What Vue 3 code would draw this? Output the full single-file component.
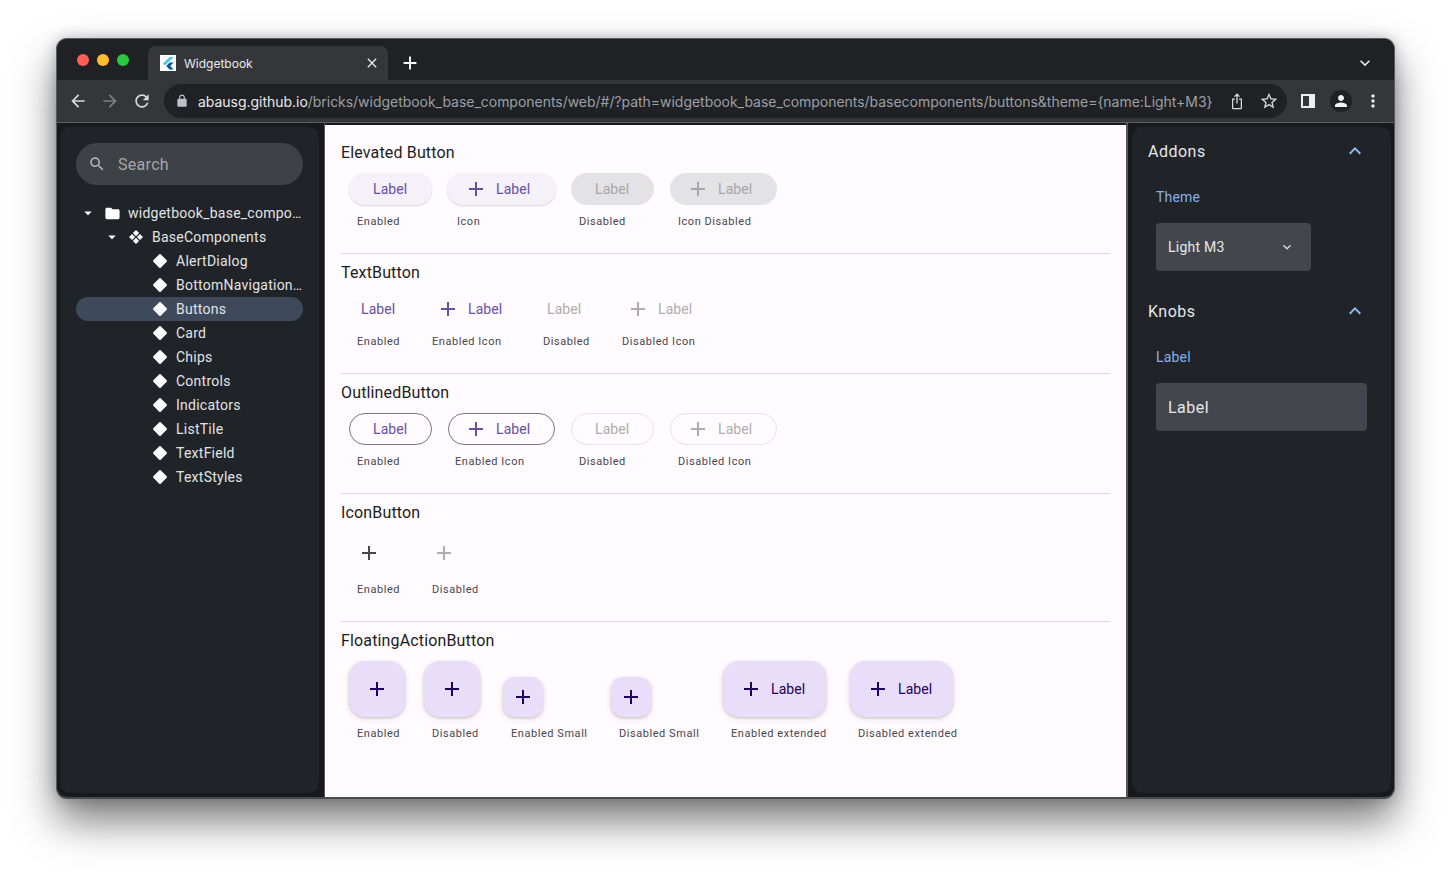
<script setup>
const icons = {
  search: 'M15.5 14h-.79l-.28-.27C15.41 12.59 16 11.11 16 9.5 16 5.91 13.09 3 9.5 3S3 5.91 3 9.5 5.91 16 9.5 16c1.61 0 3.09-.59 4.23-1.57l.27.28v.79l5 4.99L20.49 19l-4.99-5zm-6 0C7.01 14 5 11.99 5 9.5S7.01 5 9.5 5 14 7.01 14 9.5 11.99 14 9.5 14z',
  add: 'M19 13h-6v6h-2v-6H5v-2h6V5h2v6h6v2z',
  folder: 'M10 4H4c-1.1 0-1.99.9-1.99 2L2 18c0 1.1.9 2 2 2h16c1.1 0 2-.9 2-2V8c0-1.1-.9-2-2-2h-8l-2-2z',
  drop: 'M7 10l5 5 5-5z',
  less: 'M12 8l-6 6 1.41 1.41L12 10.83l4.59 4.58L18 14z',
  more: 'M16.59 8.59L12 13.17 7.41 8.59 6 10l6 6 6-6z',
  back: 'M20 11H7.83l5.59-5.59L12 4l-8 8 8 8 1.41-1.41L7.83 13H20v-2z',
  forward: 'M12 4l-1.41 1.41L16.17 11H4v2h12.17l-5.58 5.59L12 20l8-8z',
  refresh: 'M17.65 6.35C16.2 4.9 14.21 4 12 4c-4.42 0-7.99 3.58-7.99 8s3.57 8 7.99 8c3.73 0 6.84-2.55 7.73-6h-2.08c-.82 2.33-3.04 4-5.65 4-3.31 0-6-2.69-6-6s2.69-6 6-6c1.66 0 3.14.69 4.22 1.78L13 11h7V4l-2.35 2.35z',
  lock: 'M18 8h-1V6c0-2.76-2.24-5-5-5S7 3.24 7 6v2H6c-1.1 0-2 .9-2 2v10c0 1.1.9 2 2 2h12c1.1 0 2-.9 2-2V10c0-1.1-.9-2-2-2zM9 6c0-1.66 1.34-3 3-3s3 1.34 3 3v2H9V6z',
  star: 'M22 9.24l-7.19-.62L12 2 9.19 8.63 2 9.24l5.46 4.73L5.82 21 12 17.27 18.18 21l-1.63-7.03L22 9.24zM12 15.4l-3.76 2.27 1-4.28-3.32-2.88 4.38-.38L12 6.1l1.71 4.04 4.38.38-3.32 2.88 1 4.28L12 15.4z',
  person: 'M12 12c2.21 0 4-1.79 4-4s-1.79-4-4-4-4 1.79-4 4 1.79 4 4 4zm0 2c-2.67 0-8 1.34-8 4v2h16v-2c0-2.66-5.33-4-8-4z',
  dots: 'M12 8c1.1 0 2-.9 2-2s-.9-2-2-2-2 .9-2 2 .9 2 2 2zm0 2c-1.1 0-2 .9-2 2s.9 2 2 2 2-.9 2-2-.9-2-2-2zm0 6c-1.1 0-2 .9-2 2s.9 2 2 2 2-.9 2-2-.9-2-2-2z',
  close: 'M19 6.41L17.59 5 12 10.59 6.41 5 5 6.41 10.59 12 5 17.59 6.41 19 12 13.41 17.59 19 19 17.59 13.41 12z',
  share: 'M12 2.6 8.4 6.2l1.1 1.1 1.7-1.7V15h1.6V5.6l1.7 1.7 1.1-1.1L12 2.6zM6 9v11.5c0 .8.7 1.5 1.5 1.5h9c.8 0 1.5-.7 1.5-1.5V9h-3.5v1.5h2v10h-9v-10h2V9H6z',
  diamond: 'M12 1.6c.4 0 .8.2 1.1.4l8.9 8.9c.6.6.6 1.6 0 2.2l-8.9 8.9c-.6.6-1.6.6-2.2 0L2 13.1c-.6-.6-.6-1.6 0-2.2L10.9 2c.3-.2.7-.4 1.1-.4z',
  comp: 'M12 1.5 16.6 6.1 12 10.7 7.4 6.1zM6.1 7.4 10.7 12 6.1 16.6 1.5 12zM17.9 7.4 22.5 12 17.9 16.6 13.3 12zM12 13.3 16.6 17.9 12 22.5 7.4 17.9z',
}

const leaves = ['AlertDialog', 'BottomNavigation…', 'Buttons', 'Card', 'Chips', 'Controls', 'Indicators', 'ListTile', 'TextField', 'TextStyles']

const sections = [
  {
    title: 'Elevated Button',
    items: [
      { cap: 'Enabled', w: 98, c: 8, type: 'elevated' },
      { cap: 'Icon', w: 124, c: 10, type: 'elevated lifted', icon: true },
      { cap: 'Disabled', w: 99, c: 8, type: 'elevated off' },
      { cap: 'Icon Disabled', w: 120, c: 8, type: 'elevated off', icon: true },
    ],
  },
  {
    title: 'TextButton',
    items: [
      { cap: 'Enabled', w: 79, c: 8, type: 'text' },
      { cap: 'Enabled Icon', w: 107, c: 4, type: 'text', icon: true },
      { cap: 'Disabled', w: 83, c: 8, type: 'text off' },
      { cap: 'Disabled Icon', w: 120, c: 4, type: 'text off', icon: true },
    ],
  },
  {
    title: 'OutlinedButton',
    items: [
      { cap: 'Enabled', w: 98, c: 8, type: 'outlined' },
      { cap: 'Enabled Icon', w: 124, c: 8, type: 'outlined nudged', icon: true },
      { cap: 'Disabled', w: 99, c: 8, type: 'outlined off' },
      { cap: 'Disabled Icon', w: 120, c: 8, type: 'outlined off', icon: true },
    ],
  },
]

const fabs = [
  { cap: 'Enabled', w: 75, type: 'fab' },
  { cap: 'Disabled', w: 79, type: 'fab' },
  { cap: 'Enabled Small', w: 108, type: 'fab small' },
  { cap: 'Disabled Small', w: 112, type: 'fab small' },
  { cap: 'Enabled extended', w: 127, type: 'fab wide', label: true },
  { cap: 'Disabled extended', w: 130, type: 'fab wide', label: true },
]
</script>

<template>
  <div class="page">
    <div class="window">
      <div class="tabstrip">
        <div class="lights">
          <span class="light red"></span>
          <span class="light amber"></span>
          <span class="light green"></span>
        </div>
        <div class="tab">
          <svg class="favicon" viewBox="0 0 16 16">
            <rect width="16" height="16" fill="#fff" />
            <path d="M9.6 2 3 8.6l2 2L13.6 2z" fill="#47c5fb" />
            <path d="M9.6 7.6 6.2 11l3.4 3.4h4L10.2 11l3.4-3.4z" fill="#00569e" />
          </svg>
          <span class="tab-title">Widgetbook</span>
          <svg class="tab-close" viewBox="0 0 24 24"><path :d="icons.close" /></svg>
        </div>
        <svg class="new-tab" viewBox="0 0 24 24"><path :d="icons.add" /></svg>
        <svg class="tab-menu" viewBox="0 0 24 24"><path :d="icons.more" /></svg>
      </div>

      <div class="toolbar">
        <svg class="tool" viewBox="0 0 24 24"><path :d="icons.back" /></svg>
        <svg class="tool dim" viewBox="0 0 24 24"><path :d="icons.forward" /></svg>
        <svg class="tool" viewBox="0 0 24 24"><path :d="icons.refresh" /></svg>
        <div class="omnibox">
          <svg class="lock" viewBox="0 0 24 24"><path :d="icons.lock" /></svg>
          <div class="url"><span class="host">abausg.github.io</span>/bricks/widgetbook_base_components/web/#/?path=widgetbook_base_components/basecomponents/buttons&amp;theme={name:Light+M3}</div>
          <svg class="tool" viewBox="0 0 24 24"><path :d="icons.share" /></svg>
          <svg class="tool" viewBox="0 0 24 24"><path :d="icons.star" /></svg>
        </div>
        <div class="side-toggle"><span></span></div>
        <div class="avatar">
          <svg viewBox="0 0 24 24"><path :d="icons.person" /></svg>
        </div>
        <svg class="tool kebab" viewBox="0 0 24 24"><path :d="icons.dots" /></svg>
      </div>

      <div class="body">
        <aside class="rail left">
          <div class="panel nav">
            <div class="search">
              <svg viewBox="0 0 24 24"><path :d="icons.search" /></svg>
              <span>Search</span>
            </div>
            <div class="tree">
              <div class="row lvl0">
                <svg class="caret" viewBox="0 0 24 24"><path :d="icons.drop" /></svg>
                <svg class="folder" viewBox="0 0 24 24"><path :d="icons.folder" /></svg>
                <span>widgetbook_base_compo…</span>
              </div>
              <div class="row lvl1">
                <svg class="caret" viewBox="0 0 24 24"><path :d="icons.drop" /></svg>
                <svg class="comp" viewBox="0 0 24 24"><path :d="icons.comp" /></svg>
                <span>BaseComponents</span>
              </div>
              <div v-for="leaf in leaves" :key="leaf" class="row lvl2" :class="{ selected: leaf === 'Buttons' }">
                <svg class="leaf" viewBox="0 0 24 24"><path :d="icons.diamond" /></svg>
                <span>{{ leaf }}</span>
              </div>
            </div>
          </div>
        </aside>

        <main class="content">
          <section v-for="s in sections" :key="s.title" class="section">
            <h2>{{ s.title }}</h2>
            <div class="cells">
              <div v-for="item in s.items" :key="item.cap" class="cell" :style="{ width: item.w + 'px' }">
                <div class="slot">
                  <div class="btn" :class="[item.type, { 'with-icon': item.icon }]">
                    <svg v-if="item.icon" viewBox="0 0 24 24"><path :d="icons.add" /></svg>
                    <span>Label</span>
                  </div>
                </div>
                <div class="cap" :style="{ paddingLeft: item.c + 'px' }">{{ item.cap }}</div>
              </div>
            </div>
          </section>

          <section class="section tall">
            <h2>IconButton</h2>
            <div class="cells spaced">
              <div class="cell icon-cell-a">
                <div class="icon-btn"><svg viewBox="0 0 24 24"><path :d="icons.add" /></svg></div>
                <div class="cap pad">Enabled</div>
              </div>
              <div class="cell icon-cell-b">
                <div class="icon-btn off"><svg viewBox="0 0 24 24"><path :d="icons.add" /></svg></div>
                <div class="cap pad">Disabled</div>
              </div>
            </div>
          </section>

          <section class="section last">
            <h2>FloatingActionButton</h2>
            <div class="cells spaced">
              <div v-for="f in fabs" :key="f.cap" class="cell fab-cell" :style="{ width: f.w + 'px' }">
                <div :class="f.type">
                  <svg viewBox="0 0 24 24"><path :d="icons.add" /></svg>
                  <span v-if="f.label">Label</span>
                </div>
                <div class="cap pad">{{ f.cap }}</div>
              </div>
            </div>
          </section>
        </main>

        <aside class="rail right">
          <div class="panel addons">
            <div class="head">
              <span>Addons</span>
              <svg viewBox="0 0 24 24"><path :d="icons.less" /></svg>
            </div>
            <div class="field-label">Theme</div>
            <div class="dropdown">
              <span>Light M3</span>
              <svg viewBox="0 0 24 24"><path :d="icons.more" /></svg>
            </div>
            <div class="head knobs">
              <span>Knobs</span>
              <svg viewBox="0 0 24 24"><path :d="icons.less" /></svg>
            </div>
            <div class="field-label">Label</div>
            <div class="input">Label</div>
          </div>
        </aside>
      </div>
    </div>
  </div>
</template>

<style>
html, body { margin: 0; background: #fff; overflow: hidden; }
</style>

<style scoped>
.page {
  box-sizing: border-box;
  width: 1451px;
  height: 873px;
  padding: 38px 56px 0;
  background: #fff;
  font-family: Roboto, "Liberation Sans", sans-serif;
}
.window {
  box-sizing: border-box;
  width: 1339px;
  height: 761px;
  border: 1px solid #5a5b5e;
  border-bottom: 2px solid #4a4a4c;
  border-radius: 11px;
  overflow: hidden;
  display: flex;
  flex-direction: column;
  background: #17191c;
}
.page .window { box-shadow: 0 22px 42px rgba(0, 0, 0, .52), 0 0 14px rgba(0, 0, 0, .22); }

.tabstrip {
  height: 41px;
  flex: none;
  display: flex;
  align-items: center;
  background: #202124;
}
.lights { display: flex; gap: 8px; padding-left: 20px; width: 71px; box-sizing: content-box; }
.light { width: 12px; height: 12px; border-radius: 50%; flex: none; }
.red { background: #ff5f57; }
.amber { background: #febc2e; }
.green { background: #28c840; }
.tab {
  box-sizing: border-box;
  width: 240px;
  height: 34px;
  align-self: flex-end;
  display: flex;
  align-items: center;
  padding: 0 8px 0 12px;
  background: #35363a;
  border-radius: 8px 8px 0 0;
}
.favicon { width: 16px; height: 16px; flex: none; }
.tab-title {
  margin-left: 8px;
  flex: 1;
  color: #e8eaed;
  font: 400 12px Inter, "Liberation Sans", sans-serif;
}
.tab-close { width: 16px; height: 16px; fill: #e8eaed; }
.new-tab { width: 22px; height: 22px; margin-left: 11px; margin-top: 6px; fill: #fff; }
.tab-menu { width: 20px; height: 20px; margin-left: auto; margin-right: 19px; margin-top: 6px; fill: #e8eaed; }

.toolbar {
  height: 42px;
  flex: none;
  display: flex;
  align-items: center;
  gap: 12px;
  padding-left: 11px;
  background: #35363a;
  border-bottom: 1px solid #5f6063;
  box-sizing: content-box;
}
.tool { width: 20px; height: 20px; flex: none; fill: #d7dadd; }
.tool.dim { fill: #7d7e81; }
.omnibox {
  box-sizing: border-box;
  width: 1123px;
  height: 34px;
  display: flex;
  align-items: center;
  gap: 12px;
  padding: 0 8px 0 11px;
  background: #202124;
  border-radius: 17px;
}
.lock { width: 14px; height: 14px; flex: none; fill: #bdc1c6; }
.url {
  flex: 1;
  min-width: 0;
  margin-left: -3px;
  white-space: nowrap;
  color: #9aa0a6;
  font: 400 14px Inter, "Liberation Sans", sans-serif;
  letter-spacing: -.03px;
}
.host { color: #e8eaed; }
.side-toggle {
  box-sizing: border-box;
  width: 14px;
  height: 14px;
  margin-left: 2px;
  margin-right: 3px;
  background: #eceef0;
  padding: 2px 6px 2px 2px;
}
.side-toggle span { display: block; width: 100%; height: 100%; background: #35363a; }
.avatar {
  width: 22px;
  height: 22px;
  border-radius: 50%;
  background: #202124;
  display: flex;
  align-items: center;
  justify-content: center;
}
.avatar svg { width: 18px; height: 18px; fill: #f1f3f4; }
.kebab { margin-left: -1px; fill: #e8eaed; }

.body { flex: 1; min-height: 0; display: flex; }
.rail { box-sizing: border-box; width: 268px; flex: none; display: flex; padding: 4px 3px; }
.rail.left { border-right: 1px solid #55575a; padding-right: 5px; }
.rail.right { border-left: 2px solid #55575a; padding-left: 4px; }
.panel { flex: 1; min-width: 0; background: #202327; border-radius: 10px; }
.nav { padding: 16px; }
.search {
  height: 42px;
  border-radius: 21px;
  background: #3e4146;
  display: flex;
  align-items: center;
  gap: 12px;
  padding-left: 12px;
  color: #a5a7aa;
  font-size: 16px;
  letter-spacing: .3px;
}
.search svg { width: 18px; height: 18px; fill: #b5b7ba; }
.tree { margin-top: 16px; }
.row {
  height: 24px;
  display: flex;
  align-items: center;
  border-radius: 12px;
  color: #e1e3e6;
  font-size: 14px;
  letter-spacing: .25px;
  white-space: nowrap;
}
.row.selected { background: #3e4a5c; }
.caret { width: 18px; height: 18px; fill: #fff; flex: none; margin-left: 3px; }
.folder { width: 17px; height: 17px; fill: #fff; flex: none; margin-left: 7px; margin-right: 7px; }
.lvl1 .caret { margin-left: 27px; }
.comp { width: 16px; height: 16px; fill: #fff; flex: none; margin-left: 7px; margin-right: 8px; }
.leaf { width: 16px; height: 16px; fill: #fff; flex: none; margin-left: 76px; margin-right: 8px; }

.content {
  flex: 1;
  min-width: 0;
  margin-top: 2px;
  padding: 9px 16px 0;
  background: #fffbfe;
  color: #1c1b1f;
}
.section { height: 120px; box-sizing: border-box; padding-top: 7px; border-bottom: 1px solid #dcdade; }
.section.tall { height: 128px; }
.section.last { border-bottom: 0; height: auto; }
h2 {
  margin: 0;
  height: 24px;
  font-size: 16px;
  font-weight: 400;
  line-height: 24px;
  letter-spacing: .15px;
}
.cells { display: flex; padding-left: 8px; margin-top: 4px; }
.cells.spaced { margin-top: 8px; }
.cell { flex: none; display: flex; flex-direction: column; }
.icon-cell-a { width: 75px; }
.icon-cell-b { width: 100px; }
.slot { height: 40px; display: flex; align-items: center; }
.cap {
  height: 24px;
  line-height: 26px;
  font-size: 11px;
  letter-spacing: .55px;
  color: #49454f;
  white-space: nowrap;
}
.pad { padding-left: 8px; margin-top: 4px; }

.btn {
  box-sizing: border-box;
  height: 32px;
  display: inline-flex;
  align-items: center;
  justify-content: center;
  gap: 8px;
  padding: 0 25px 0 24px;
  border-radius: 16px;
  color: #6750a4;
  fill: #6750a4;
  font-size: 14px;
  letter-spacing: .1px;
  white-space: nowrap;
}
.btn svg { width: 24px; height: 24px; flex: none; }
.btn.with-icon { padding-left: 16px; }
.btn.off { color: #aeacb0; fill: #aeacb0; }
.btn.elevated { background: #f5f1f9; box-shadow: 0 1px 2px rgba(0, 0, 0, .16); }
.btn.elevated.lifted { padding: 0 26px 0 17px; }
.btn.elevated.off { background: #e3e2e4; box-shadow: none; color: #a7a6a9; fill: #a7a6a9; }
.btn.text { padding: 0 12px; }
.btn.text.with-icon { padding: 0 12px 0 8px; }
.btn.outlined { border: 1px solid #79747e; padding: 0 24px 0 23px; }
.btn.outlined.with-icon { padding-left: 15px; }
.btn.outlined.nudged { margin-left: 1px; }
.btn.outlined.off { border-color: #e6e3e8; }

.icon-btn {
  width: 40px;
  height: 40px;
  display: flex;
  align-items: center;
  justify-content: center;
  fill: #49454f;
}
.icon-btn svg { width: 24px; height: 24px; }
.icon-btn.off { fill: #aeacb0; }

.fab-cell { justify-content: flex-end; height: 84px; }
.fab {
  box-sizing: border-box;
  width: 56px;
  height: 56px;
  display: flex;
  align-items: center;
  justify-content: center;
  gap: 8px;
  border-radius: 16px;
  background: #e8defa;
  box-shadow: 0 1px 3px rgba(0, 0, 0, .16), 0 2px 7px rgba(0, 0, 0, .1);
  fill: #21005d;
  color: #21005d;
  font-size: 14px;
  letter-spacing: .1px;
}
.fab svg { width: 24px; height: 24px; flex: none; }
.fab.small { width: 40px; height: 40px; border-radius: 12px; }
.fab.wide { width: 103px; justify-content: flex-start; padding-left: 16px; }

.addons { padding: 12px 0 0; }
.head {
  display: flex;
  align-items: center;
  justify-content: space-between;
  height: 24px;
  padding: 0 24px 0 16px;
  color: #e6e7e9;
  font-size: 16px;
  letter-spacing: .5px;
}
.head svg { width: 24px; height: 24px; fill: #8fbcf5; }
.head.knobs { margin-top: 28px; }
.field-label {
  margin: 22px 0 14px 24px;
  height: 24px;
  line-height: 24px;
  color: #86b1ea;
  font-size: 14px;
  letter-spacing: .2px;
}
.dropdown, .input {
  box-sizing: border-box;
  height: 48px;
  margin-left: 24px;
  display: flex;
  align-items: center;
  border-radius: 4px;
  background: #43464c;
  color: #e6e7e9;
  padding-left: 12px;
}
.dropdown {
  width: 155px;
  justify-content: space-between;
  padding-right: 16px;
  font-size: 14px;
  letter-spacing: .25px;
}
.dropdown svg { width: 16px; height: 16px; fill: #d7d8da; }
.input { width: 211px; font-size: 16px; letter-spacing: .5px; }
</style>
